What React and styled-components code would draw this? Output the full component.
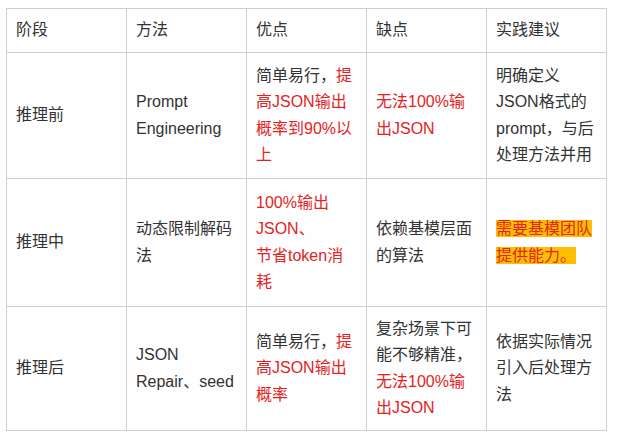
import React from "react";
import styled, { createGlobalStyle } from "styled-components";

const Global = createGlobalStyle`
  html, body { margin: 0; padding: 0; background: #fefefe; }
  body {
    font-family: "Liberation Sans", "Noto Sans CJK SC", sans-serif;
    color: #333;
  }
`;

const Page = styled.div`
  padding: 8px 0 0 6px;
`;

const Table = styled.table`
  border-collapse: collapse;
  table-layout: fixed;
  width: 601px;
  font-size: 16px;
  line-height: 26.5px;
`;

const Col = styled.col`
  width: 120px;
`;

const Row = styled.tr`
  height: ${(p) => p.$h}px;
`;

const HeadCell = styled.th`
  box-sizing: border-box;
  border: 1px solid #cfcfcf;
  padding: 0 9px 0 9px;
  text-align: left;
  font-weight: normal;
  vertical-align: middle;
`;

const Cell = styled.td`
  box-sizing: border-box;
  border: 1px solid #cfcfcf;
  padding: 0 9px 0 9px;
  vertical-align: middle;
`;

const Red = styled.span`
  color: #e3231f;
`;

const Mark = styled.span`
  color: #e3231f;
  background: #ffbe00;
`;

const rows = [
  {
    h: 126,
    cells: [
      "推理前",
      "Prompt Engineering",
      <>简单易行，<Red>提高JSON输出概率到90%以上</Red></>,
      <Red>无法100%输出JSON</Red>,
      "明确定义JSON格式的prompt，与后处理方法并用",
    ],
  },
  {
    h: 128,
    cells: [
      "推理中",
      "动态限制解码法",
      <Red>100%输出JSON、<br />节省token消耗</Red>,
      "依赖基模层面的算法",
      <Mark>需要基模团队提供能力。</Mark>,
    ],
  },
  {
    h: 124,
    cells: [
      "推理后",
      "JSON Repair、seed",
      <>简单易行，<Red>提高JSON输出概率</Red></>,
      <>复杂场景下可能不够精准，<Red>无法100%输出JSON</Red></>,
      "依据实际情况引入后处理方法",
    ],
  },
];

const heads = ["阶段", "方法", "优点", "缺点", "实践建议"];

export default function App() {
  return (
    <>
      <Global />
      <Page>
        <Table>
          <colgroup>
            {heads.map((h) => (
              <Col key={h} />
            ))}
          </colgroup>
          <thead>
            <Row $h={44}>
              {heads.map((h) => (
                <HeadCell key={h}>{h}</HeadCell>
              ))}
            </Row>
          </thead>
          <tbody>
            {rows.map((r, i) => (
              <Row key={i} $h={r.h}>
                {r.cells.map((c, j) => (
                  <Cell key={j}>{c}</Cell>
                ))}
              </Row>
            ))}
          </tbody>
        </Table>
      </Page>
    </>
  );
}
